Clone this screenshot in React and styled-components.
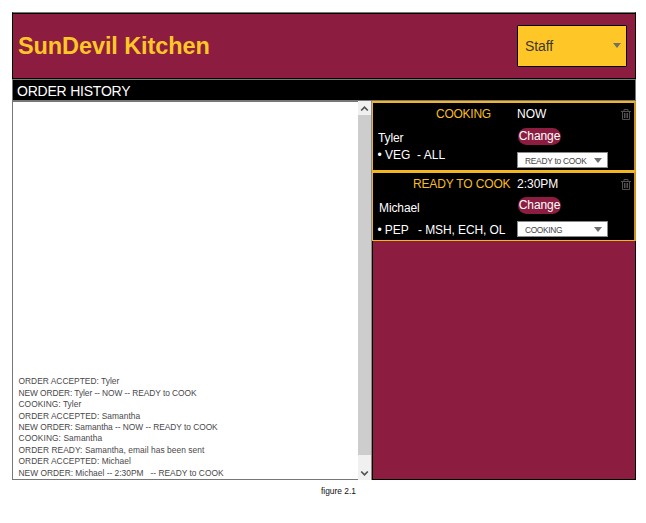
import React from "react";
import styled, { createGlobalStyle } from "styled-components";

const maroon = "#8c1d40";
const gold = "#ffc627";

const GlobalStyle = createGlobalStyle`
  * { box-sizing: border-box; }
  body { margin: 0; background: #fff; font-family: "Liberation Sans", Arial, sans-serif; }
`;

const Page = styled.div`
  width: 646px;
  height: 523px;
  padding: 12px 10px 0 12px;
  overflow: hidden;
`;

const Header = styled.header`
  height: 67px;
  display: flex;
  align-items: center;
  justify-content: space-between;
  padding: 0 8px 0 5px;
  background: ${maroon};
  border: 1px solid #000;
  border-top: 1px solid #777;
  box-shadow: inset 0 1px 0 #000;
`;

const Title = styled.h1`
  margin: 0;
  color: ${gold};
  font-size: 23.5px;
  line-height: 28px;
  letter-spacing: -0.1px;
  white-space: nowrap;
`;

const RoleSelect = styled.button`
  width: 110px;
  height: 42px;
  display: flex;
  align-items: center;
  justify-content: space-between;
  padding: 0 5px 0 7px;
  background: ${gold};
  border: 1px solid #000;
  border-radius: 1px;
  color: #3c3930;
  font: 14px "Liberation Sans", Arial, sans-serif;
  letter-spacing: -0.1px;
`;

const Arrow = styled.span`
  width: 0;
  height: 0;
  border: 4px solid transparent;
  border-top: 5px solid #70706d;
  border-bottom: 0;
`;

const SectionBar = styled.div`
  height: 22px;
  padding-left: 4px;
  background: #000;
  border: 1px solid #777;
  color: #fff;
  font-size: 14px;
  line-height: 22px;
  letter-spacing: -0.22px;
`;

const Content = styled.main`
  height: 379px;
  display: grid;
  grid-template-columns: 346px 14px 264px;
`;

const Log = styled.div`
  display: flex;
  flex-direction: column;
  justify-content: flex-end;
  padding: 0 0 0 5.5px;
  border: 1px solid #777;
  border-width: 1px 0 1px 1px;
  color: #48484a;
`;

const LogLine = styled.div`
  height: 11.4px;
  font-size: 8.4px;
  line-height: 11.4px;
  letter-spacing: ${(p) => p.$spacing}px;
  white-space: pre;
`;

const ScrollBar = styled.div`
  display: grid;
  grid-template-rows: 14px 1fr 25px;
  background: #cdcdcd;
  border-right: 1px solid #8a8a8a;
`;

const ScrollButton = styled.div`
  display: flex;
  align-items: ${(p) => (p.$end ? "flex-end" : "center")};
  justify-content: center;
  padding-bottom: ${(p) => (p.$end ? 3 : 0)}px;
  background: #f0f0f0;
`;

const Orders = styled.section`
  background: ${maroon};
  border: 1px solid #000;
  border-width: 0 1px 1px 1px;
`;

const Card = styled.article`
  height: 70px;
  margin: 0 -1px;
  display: grid;
  grid-template-columns: 144px 1fr 13px;
  background: #000;
  border: 1px solid #f2b61e;
  border-top-width: 2px;
  border-right: 2px solid #c9961b;
  color: #fff;
  font-size: 12px;
  line-height: 14px;
  white-space: pre;
`;

const Details = styled.div`
  padding-top: ${(p) => p.$top}px;
  padding-left: 4px;
`;

const Status = styled.div`
  margin-left: ${(p) => p.$indent}px;
  color: #f6bd25;
  letter-spacing: ${(p) => p.$spacing}px;
`;

const Customer = styled.div`
  margin-top: ${(p) => p.$gap}px;
  padding-left: ${(p) => p.$indent}px;
  letter-spacing: -0.1px;
`;

const Items = styled.div`
  margin-top: ${(p) => p.$gap}px;
  padding-left: 0.5px;
  letter-spacing: ${(p) => p.$spacing}px;
`;

const Actions = styled.div`
  display: flex;
  flex-direction: column;
  align-items: flex-start;
  padding-top: ${(p) => p.$top}px;
`;

const ChangeButton = styled.button`
  width: 43px;
  height: 17px;
  margin: ${(p) => p.$gap}px 0 0 1px;
  padding: 0;
  border: 0;
  border-radius: 9px;
  background: ${maroon};
  color: #fff;
  text-align: center;
  font: 12px/17px "Liberation Sans", Arial, sans-serif;
  letter-spacing: -0.1px;
`;

const StateSelect = styled.button`
  width: 91px;
  height: 16px;
  margin-top: 7px;
  display: flex;
  align-items: center;
  justify-content: space-between;
  padding: 1px 5px 0 7px;
  border: 1px solid #888;
  background: #fff;
  color: #444;
  font: 8.4px "Liberation Sans", Arial, sans-serif;
  letter-spacing: ${(p) => p.$spacing}px;
`;

const TrashSlot = styled.div`
  padding-top: ${(p) => p.$top}px;
`;

const TrashIcon = styled.svg`
  display: block;
`;

const Caption = styled.footer`
  margin-top: 6px;
  padding-left: 309px;
  color: #111;
  font-size: 8.4px;
  line-height: 11px;
`;

const Chevron = ({ down }) => (
  <svg width="9" height="7" viewBox="0 0 9 7" fill="none" stroke="#505050" strokeWidth="1.7">
    <path d={down ? "M1.2 1.5 4.5 4.8 7.8 1.5" : "M1.2 5.5 4.5 2.2 7.8 5.5"} />
  </svg>
);

const Trash = () => (
  <TrashIcon width="10" height="11" viewBox="0 0 10 11" fill="none" stroke="#505050">
    <path d="M0 2.5H10M3 2V.5H7V2M1.5 3V10.5H8.5V3M3.5 4V9M5 4V9M6.5 4V9" />
  </TrashIcon>
);

const logLines = [
  ["ORDER ACCEPTED: Tyler", 0.02],
  ["NEW ORDER: Tyler -- NOW -- READY to COOK", -0.07],
  ["COOKING: Tyler", 0.04],
  ["ORDER ACCEPTED: Samantha", 0.05],
  ["NEW ORDER: Samantha -- NOW -- READY to COOK", -0.04],
  ["COOKING: Samantha", 0.08],
  ["ORDER READY: Samantha, email has been sent", 0.06],
  ["ORDER ACCEPTED: Michael", 0.05],
  ["NEW ORDER: Michael -- 2:30PM   -- READY to COOK", 0.01],
];

const orders = [
  {
    status: "COOKING", time: "NOW", name: "Tyler", items: "• VEG  - ALL", next: "READY to COOK",
    top: 4, indent: 59, spacing: -0.25, nameGap: 10, nameIndent: 1, itemGap: 3, itemSpacing: 0, changeGap: 7, trash: 6, nextSpacing: -0.27,
  },
  {
    status: "READY TO COOK", time: "2:30PM", name: "Michael", items: "• PEP   - MSH, ECH, OL", next: "COOKING",
    top: 4, indent: 36, spacing: -0.15, nameGap: 10, nameIndent: 2, itemGap: 8, itemSpacing: -0.1, changeGap: 6, trash: 6, nextSpacing: -0.35,
  },
];

export default function App() {
  return (
    <Page>
      <GlobalStyle />
      <Header>
        <Title>SunDevil Kitchen</Title>
        <RoleSelect>Staff<Arrow /></RoleSelect>
      </Header>
      <SectionBar>ORDER HISTORY</SectionBar>
      <Content>
        <Log>
          {logLines.map(([text, spacing]) => (
            <LogLine key={text} $spacing={spacing}>{text}</LogLine>
          ))}
        </Log>
        <ScrollBar>
          <ScrollButton><Chevron /></ScrollButton>
          <div />
          <ScrollButton $end><Chevron down /></ScrollButton>
        </ScrollBar>
        <Orders>
          {orders.map((o) => (
            <Card key={o.name}>
              <Details $top={o.top}>
                <Status $indent={o.indent} $spacing={o.spacing}>{o.status}</Status>
                <Customer $gap={o.nameGap} $indent={o.nameIndent}>{o.name}</Customer>
                <Items $gap={o.itemGap} $spacing={o.itemSpacing}>{o.items}</Items>
              </Details>
              <Actions $top={o.top}>
                <div>{o.time}</div>
                <ChangeButton $gap={o.changeGap}>Change</ChangeButton>
                <StateSelect $spacing={o.nextSpacing}>{o.next}<Arrow /></StateSelect>
              </Actions>
              <TrashSlot $top={o.trash}><Trash /></TrashSlot>
            </Card>
          ))}
        </Orders>
      </Content>
      <Caption>figure 2.1</Caption>
    </Page>
  );
}
